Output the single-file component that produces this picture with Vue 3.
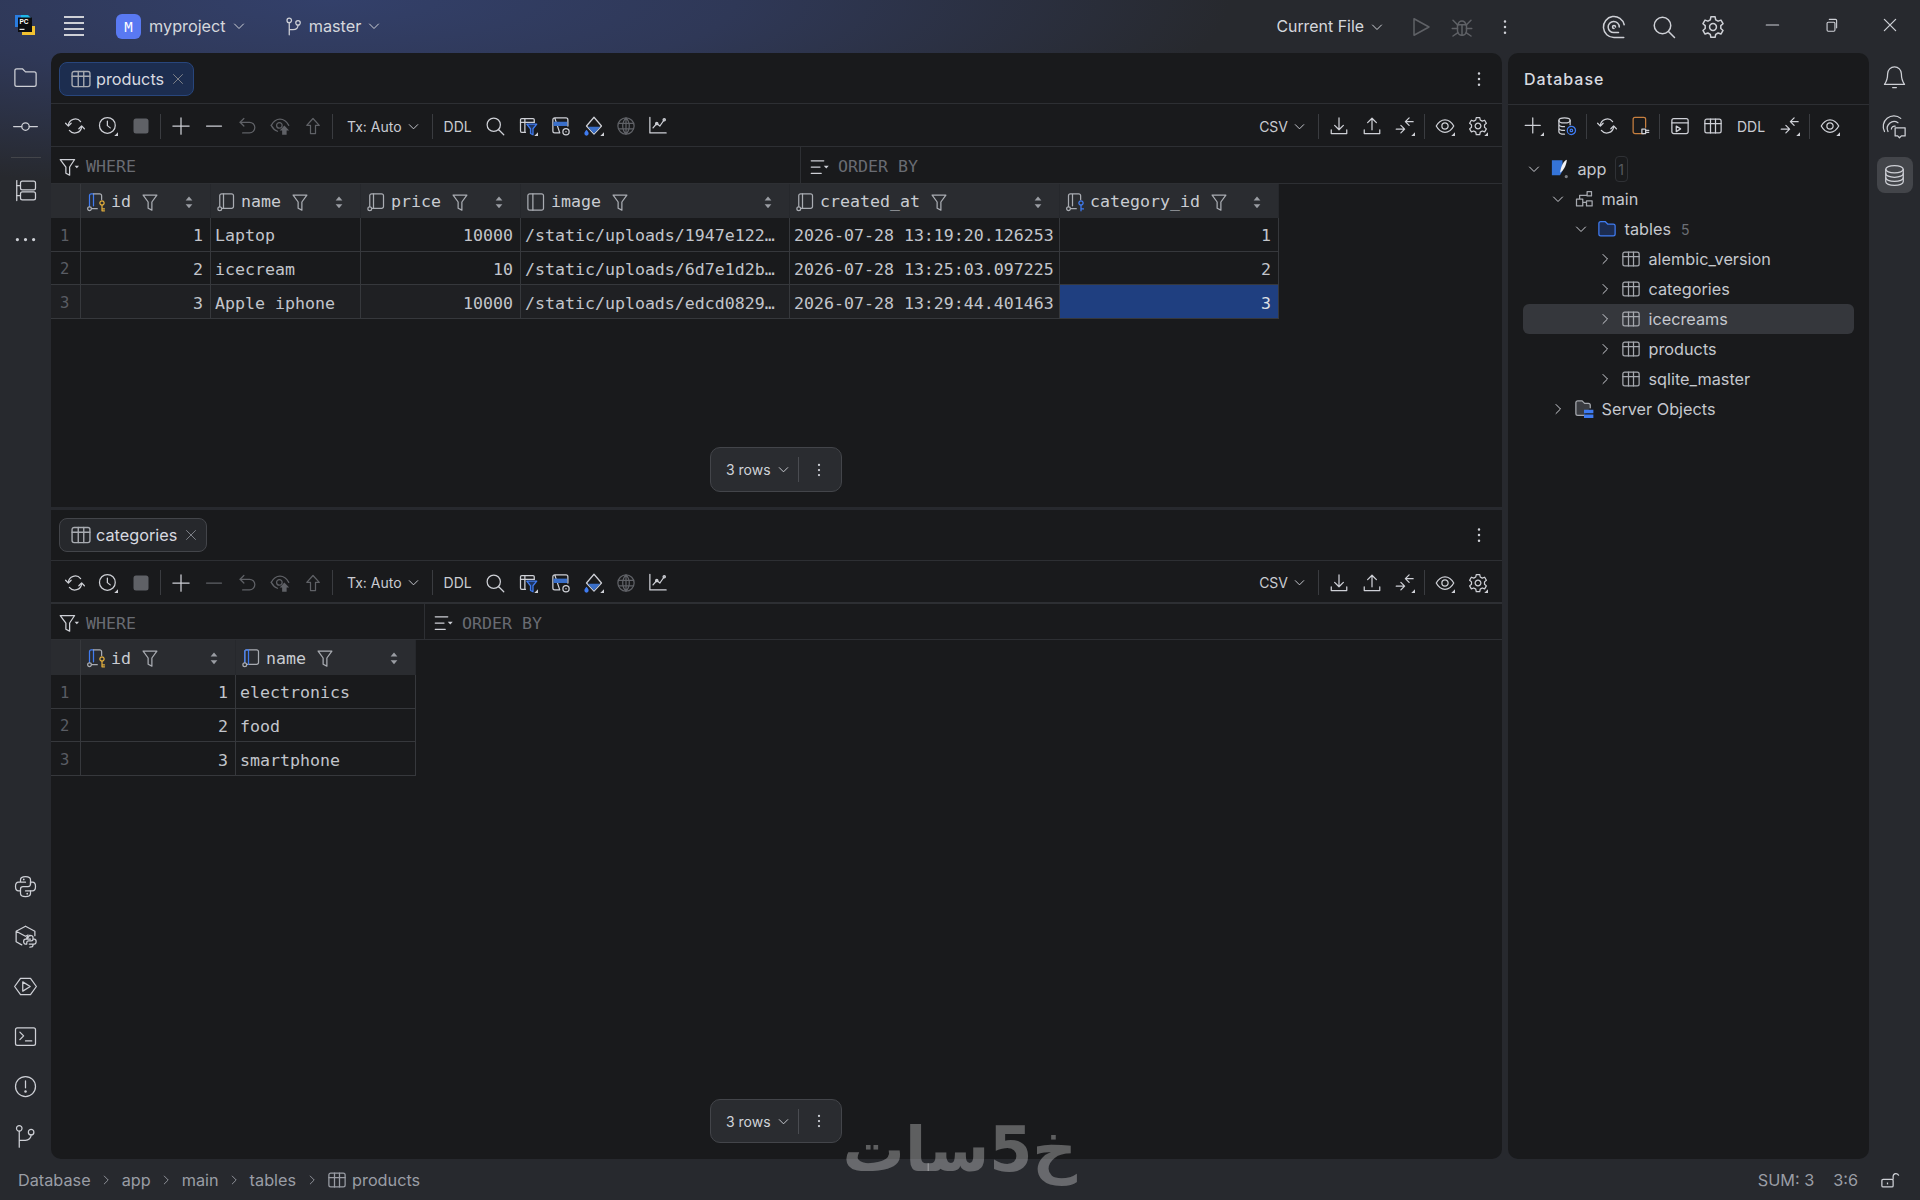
<script setup>
import { h } from 'vue'

const circ = (x, y, r) => `M${x - r} ${y}a${r} ${r} 0 1 0 ${2 * r} 0a${r} ${r} 0 1 0 ${-2 * r} 0z`
const tri = { d: 'M16 13v3h-3z', f: '#ced0d6', c: 'none' }
const BLUE = '#3f7bf0'
const tableD = ['M3 2.5h10A1.5 1.5 0 0 1 14.5 4v8a1.5 1.5 0 0 1-1.5 1.5H3A1.5 1.5 0 0 1 1.5 12V4A1.5 1.5 0 0 1 3 2.5z', 'M1.5 6h13M6 2.5v11M10 2.5v11']
const gearD = ['M6.6 1.2h2.8l.4 2 1.6.9 1.9-.7 1.4 2.4-1.5 1.3v1.9l1.5 1.3-1.4 2.4-1.9-.7-1.6.9-.4 2H6.6l-.4-2-1.6-.9-1.9.7-1.4-2.4 1.5-1.3V7.1L1.3 5.8 2.7 3.4l1.9.7 1.6-.9z', circ(8, 8, 2.3)]
const colBody = 'M3 11.5V3A1.5 1.5 0 0 1 4.5 1.5h8A1.5 1.5 0 0 1 14 3v8.5a1.5 1.5 0 0 1-1.5 1.5H5'
const pyD = [
  'M10 6.5H6V4.500C6 3 7.500 2 10 2s4 1 4 2.500V8a2 2 0 0 1-2 2H8a2 2 0 0 0-2 2v1.500H4.500C3 13.500 2 12 2 10s1-3.500 2.500-3.500H6',
  'M10 13.500h4v2C14 17 12.500 18 10 18s-4-1-4-2.500V13.500',
  'M14 13.500h1.500C17 13.500 18 12 18 10s-1-3.500-2.500-3.500H14V8',
  { d: circ(8.600, 4.300, .7), f: 'currentColor', c: 'none' },
  { d: circ(11.400, 15.700, .7), f: 'currentColor', c: 'none' },
]

const ICONS = {
  refresh: ['M2.700 7.500A5.500 5.500 0 0 1 12.500 4.500', 'M13.300 8.500A5.500 5.500 0 0 1 3.500 11.500', 'M.5 5.800l2.200 2.300 2.200-2.300', 'M11.100 10.200l2.200-2.300 2.200 2.300'],
  clock: [circ(7.500, 7.500, 6.300), 'M7.500 4v3.700l2.300 1.800', tri],
  stop: [{ d: 'M4 2h8a2 2 0 0 1 2 2v8a2 2 0 0 1-2 2H4a2 2 0 0 1-2-2V4a2 2 0 0 1 2-2z', f: '#5f6166', c: 'none' }],
  plus: ['M8 1.500v13M1.500 8h13'],
  minus: ['M2 8h12'],
  undo: ['M5.500 2L2.500 5l3 3', 'M2.500 5H10a4 4 0 0 1 0 8.500H4.500'],
  eyeup: ['M1 7.500C2.700 4.300 5 2.500 8 2.500s5.300 1.800 7 5', 'M1 7.500c1.300 2.500 3 4 5 4.700', circ(7.500, 7.500, 2.200), { d: 'M11.500 7.500l3.800 4h-2v3.500h-3.600v-3.500h-2z', f: '#5f6166', c: 'none' }],
  up: ['M8 2L3 7.500h3v6.500h4V7.500h3z'],
  search: [circ(7, 7, 5.300), 'M11 11l4 4'],
  tfilter: ['M13 5V3a1 1 0 0 0-1-1H3a1 1 0 0 0-1 1v9a1 1 0 0 0 1 1h3', 'M5.500 2v11M2 5h11', { d: 'M7 6.500h8l-3 3.700V15l-2-1v-3.800z', c: BLUE, f: '#1f3560' }, tri],
  tview: ['M3 1.500h9A1.500 1.500 0 0 1 13.500 3v5M7 13.500H3A1.500 1.500 0 0 1 1.500 12V3A1.500 1.500 0 0 1 3 1.500z', { d: 'M2 4.500h11v3.500H2z', f: '#3a6fc9', c: 'none' }, circ(12, 12.500, 2.500), { d: circ(12, 12.500, .6), f: '#ced0d6', c: 'none' }],
  fill: ['M8 1L14 8l-6 6.500L2 8z', { d: 'M3 8.500h10L8 14z', f: '#3a6fc9', c: 'none' }, { d: 'M2 11c1 1.300 1.700 2 1.700 3a1.700 1.700 0 0 1-3.400 0c0-1 .7-1.700 1.700-3z', f: BLUE, c: 'none' }, tri],
  globe: [circ(8, 8, 6.500), 'M8 1.500c-3.500 3.500-3.500 9.500 0 13M8 1.500c3.500 3.500 3.500 9.500 0 13M2 5.800h12M2 10.200h12M8 1.500v13'],
  chart: ['M1.500 1v12.500h13', 'M4 9.500l3-3.500 2.500 2L13 3', circ(7, 6, .9), circ(13, 3, .9)],
  down: ['M8 1.500v9.500M4.500 7.500L8 11l3.500-3.500', 'M1.800 11v3h12.400v-3'],
  upl: ['M8 11V1.800M4.500 5.300L8 1.800l3.500 3.500', 'M1.800 11v3h12.400v-3'],
  cmp: ['M14.500 4.500H8.500M11.300 1.500l-3 3 3 3', 'M1 10.500h6.500M4.700 7.500l3 3-3 3', tri],
  eye: ['M1 8c1.800-3.300 4-5 7-5s5.200 1.700 7 5c-1.800 3.300-4 5-7 5s-5.200-1.700-7-5z', circ(8, 8, 2.500), tri],
  gear: [...gearD],
  gearT: [...gearD, tri],
  table: tableD,
  plusT: ['M7 1.500v12M1 7.500h12', tri],
  dbgear: ['M1.500 3.500c0-1.100 2-2 4.500-2s4.500.9 4.500 2-2 2-4.500 2-4.500-.9-4.500-2z', 'M1.500 3.500v9c0 1.100 2 2 4.500 2M10.500 3.500V7M1.500 6.500c0 1.100 2 2 4.500 2M1.500 9.500c0 1.100 2 2 4.500 2', { d: circ(11.500, 11.500, 3.300), c: BLUE, f: 'none' }, { d: circ(11.500, 11.500, 1), c: BLUE, f: 'none' }],
  plug: [{ d: 'M11 14H4a1.500 1.500 0 0 1-1.500-1.500v-10A1.500 1.500 0 0 1 4 1h7a1.500 1.500 0 0 1 1.500 1.500V9', c: '#c77f3f' }, 'M9.500 10.500h3v3.500h-3zM12.500 11.500h2.500M12.500 13h2.500'],
  console: ['M3 2h10a1.500 1.500 0 0 1 1.500 1.500v9A1.500 1.500 0 0 1 13 14H3a1.500 1.500 0 0 1-1.500-1.500v-9A1.500 1.500 0 0 1 3 2z', 'M1.500 5.500h13', 'M5 8l3.500 2.300L5 12.500z'],
  fw: ['M2.500 2.500h11L9.500 8v6.500L6.500 13V8z'],
  wh: ['M1 2h11.500L8.500 8v6.500L5.500 13V8z', { d: 'M12.500 7h3.500l-1.750 2z', f: '#ced0d6', c: 'none' }],
  ob: ['M1 3h10M1 8h7M1 13h8', { d: 'M11 7h4l-2 2.200z', f: '#ced0d6', c: 'none' }],
  sort: [{ d: 'M8 3.500l2.700 3.300H5.300zM8 13l-2.700-3.300h5.400z', f: '#9a9da3', c: 'none' }],
  cPk: [{ d: 'M2.800 11.500V3A1.500 1.500 0 0 1 4.300 1.500H6V11', c: BLUE }, 'M6 1.500h5A1.500 1.500 0 0 1 12.500 3v3', circ(2.800, 13.300, 1.500), 'M4.500 13.300H9', { d: circ(12.800, 8.800, 1.700), c: '#e0ad3c' }, { d: 'M12.800 10.500V15M12.800 13.500h2M12.800 15h2', c: '#e0ad3c' }],
  cFk: ['M2.800 11.500V3A1.500 1.500 0 0 1 4.300 1.500H11A1.500 1.500 0 0 1 12.500 3v3M6 1.500V11', circ(2.800, 13.300, 1.500), 'M4.500 13.300H9', { d: circ(12.800, 8.800, 1.700), c: BLUE }, { d: 'M12.800 10.500V15M12.800 13.500h2', c: BLUE }],
  cCol: [colBody, 'M6 1.500V13', circ(3, 13.300, 1.500)],
  cBlue: [colBody, { d: 'M3 11.500V3A1.500 1.500 0 0 1 4.500 1.500H6V13', c: BLUE }, circ(3, 13.300, 1.500)],
  cImg: ['M3 1.500h9.500A1.500 1.500 0 0 1 14 3v10a1.500 1.500 0 0 1-1.500 1.500H3A1.500 1.500 0 0 1 1.500 13V3A1.500 1.500 0 0 1 3 1.500z', 'M5.500 1.500v13'],
  chevD: ['M3.500 6l4.500 4.500L12.500 6'],
  chevR: ['M6 3.500l4.500 4.500L6 12.500'],
  x: ['M3.500 3.500l9 9M12.500 3.500l-9 9'],
  kebab: [{ d: circ(8, 3.500, 1) + circ(8, 8, 1) + circ(8, 12.500, 1), f: 'currentColor', c: 'none' }],
  branch: [circ(5, 3.500, 1.800), circ(12, 5.500, 1.800), 'M5 5.300V15M12 7.300c0 2.500-2 3.500-4 3.500H5'],
  play: ['M4 2.500l10 5.500-10 5.500z'],
  bug: ['M5 6.500h6v4a3 3 0 0 1-6 0z', 'M5.500 6.500a2.500 2.500 0 0 1 5 0M8 6.500V13.500M2 3.500l3 3M14 3.500l-3 3M1.500 9h3.500M14.500 9H11M2 14l3.300-2.300M14 14l-3.300-2.300'],
  spiral: ['M14.800 6.500A7 7 0 1 0 8 15H14.500', 'M11.500 8A3.700 3.700 0 1 0 8 11.700H11', 'M9 8a1 1 0 1 0-1 1'],
  mag: [circ(7, 7, 5.500), 'M11 11l4 4'],
  minW: ['M2 8h11'],
  restore: ['M5.500 5.500h5a1 1 0 0 1 1 1v6a1 1 0 0 1-1 1h-5a1 1 0 0 1-1-1v-6a1 1 0 0 1 1-1z', 'M6.500 3h5.500a1 1 0 0 1 1 1v6.500'],
  folder: ['M1.500 5V4.500A1.500 1.500 0 0 1 3 3h4.500L10 5.500h7A1.500 1.500 0 0 1 18.500 7v8.500A1.500 1.500 0 0 1 17 17H3a1.500 1.500 0 0 1-1.500-1.500z'],
  commit: [circ(10, 10, 3), 'M.5 10H7M13 10h6.500'],
  struct: ['M3 2v16', 'M3 6h3M3 14h3', 'M7.500 2.500h9A1.500 1.500 0 0 1 18 4v4a1.500 1.500 0 0 1-1.500 1.500h-9A1.500 1.500 0 0 1 6 8V4a1.500 1.500 0 0 1 1.500-1.500z', 'M7.500 11h9a1.500 1.500 0 0 1 1.500 1.500V16a1.500 1.500 0 0 1-1.500 1.500h-9A1.500 1.500 0 0 1 6 16v-3.500A1.500 1.500 0 0 1 7.500 11z'],
  dots: [{ d: circ(3.500, 10, 1.300) + circ(10, 10, 1.300) + circ(16.500, 10, 1.300), f: 'currentColor', c: 'none' }],
  python: pyD,
  pkgs: ['M10 1.800l7.500 4v3.500M10 1.800L2.500 5.800v8.400l4.500 2.500M2.500 5.800L10 9.800l2-1', 'M13.500 9.500c-1.800 0-2.500.6-2.500 1.500v1h3M11 12h-1c-1 0-1.500 1-1.500 2s.5 2 1.500 2h1v-1c0-.9.600-1.500 1.500-1.500h2c.9 0 1.500-.6 1.500-1.500v-1.500c0-.9-1-1.500-2.500-1.500zM13.500 18.500c1.800 0 2.500-.6 2.500-1.500v-1h-3M16 16h1c1 0 1.500-1 1.500-2s-.5-2-1.500-2h-1'],
  services: ['M6 3.500h8l4.700 6.500L14 16.500H6L1.300 10z', 'M7.800 6.300l6 3.700-6 3.700z'],
  term: ['M3.500 3h13A1.500 1.500 0 0 1 18 4.500v11a1.500 1.500 0 0 1-1.500 1.500h-13A1.500 1.500 0 0 1 2 15.500v-11A1.500 1.500 0 0 1 3.500 3z', 'M5.500 6.500l3 3-3 3M10 13.500h5'],
  problems: [circ(10, 10, 8), 'M10 5.500V11', { d: circ(10, 14, 1), f: 'currentColor', c: 'none' }],
  git: [circ(5, 3.500, 2.200), circ(14.500, 6.500, 2.200), 'M5 5.700V18.500M14.500 8.700c0 2.500-2 4.300-4.500 4.300H5'],
  bell: ['M10 1.500a5.500 5.500 0 0 1 5.500 5.500c0 4 .7 6 2.500 8.500H2C3.800 13 4.500 11 4.500 7A5.500 5.500 0 0 1 10 1.500z', 'M8.500 18h3'],
  aichat: ['M2 14A8.500 8.500 0 0 1 15 3.500', 'M4.800 14a5.500 5.500 0 0 1 8-7', 'M7.500 12a2.600 2.600 0 0 1 3-2.300', 'M10.500 11h8v6.500h-3l-1.500 1.500-1.500-1.500h-2z'],
  db: ['M3 5c0-1.600 3-2.900 7-2.900s7 1.300 7 2.900-3 2.900-7 2.900S3 6.600 3 5z', 'M3 5v10c0 1.600 3 2.900 7 2.900s7-1.300 7-2.900V5', 'M3 8.500c0 1.600 3 2.900 7 2.900s7-1.300 7-2.900M3 11.800c0 1.600 3 2.900 7 2.900s7-1.300 7-2.900'],
  app: [{ d: 'M1.500 1h8.500v8.500L8 13H1.500z', f: '#3574d8', c: 'none' }, { d: 'M13.500.5C10.800 1.500 9 5 8 11c2.800-2 5-5.500 5.500-10.500z', f: '#f2f3f5', c: 'none' }, { d: circ(13, 14, 1.300), f: '#7c7f85', c: 'none' }],
  schema: ['M2 8h5v5.500H2zM10.500 2H14v3.500h-3.500zM10 9.500h4.500v4H10zM4.500 8V5H10M7 10.700h3'],
  folderB: [{ d: 'M1.500 3.500A1.500 1.500 0 0 1 3 2h3.500l2 2H13a1.500 1.500 0 0 1 1.500 1.500V12a1.500 1.500 0 0 1-1.500 1.500H3A1.500 1.500 0 0 1 1.500 12z', c: BLUE, f: '#1c2c50' }],
  srv: [{ d: 'M8 13H3a1.500 1.500 0 0 1-1.500-1.500V3A1.500 1.500 0 0 1 3 1.500h3.500l2 2h3A1.500 1.500 0 0 1 13 5v2', f: '#3a3c41' }, { d: 'M8 8.500h7.500v2.800H8zM8 12.300h7.500v2.800H8z', f: BLUE, c: 'none' }],
}

const Ic = (props) => {
  const s = props.s || 20
  const vb = props.vb || 16
  return h('svg', { class: 'ic', width: s, height: s, viewBox: `0 0 ${vb} ${vb}`, fill: 'none', 'stroke-width': 1, 'stroke-linecap': 'round', 'stroke-linejoin': 'round' },
    (ICONS[props.n] || []).map((p) => {
      const o = typeof p === 'string' ? { d: p } : p
      return h('path', { d: o.d, stroke: o.c || 'currentColor', fill: o.f || 'none' })
    }))
}
Ic.props = ['n', 's', 'vb']

const leftTop = ['folder', 'commit', null, 'struct', 'dots']
const leftBottom = ['python', 'pkgs', 'services', 'term', 'problems', 'git']

const panes = [
  {
    name: 'products', cls: 'first', active: true, whereW: 750, minusDim: false,
    cols: [
      { n: 'id', icon: 'cPk', w: 130 }, { n: 'name', icon: 'cCol', w: 150 }, { n: 'price', icon: 'cCol', w: 160 },
      { n: 'image', icon: 'cImg', w: 269 }, { n: 'created_at', icon: 'cCol', w: 270 }, { n: 'category_id', icon: 'cFk', w: 219 },
    ],
    rows: [
      ['1', 'Laptop', '10000', '/static/uploads/1947e122…', '2026-07-28 13:19:20.126253', '1'],
      ['2', 'icecream', '10', '/static/uploads/6d7e1d2b…', '2026-07-28 13:25:03.097225', '2'],
      ['3', 'Apple iphone', '10000', '/static/uploads/edcd0829…', '2026-07-28 13:29:44.401463', '3'],
    ],
    right: [0, 2, 5], hover: 2, sel: [2, 5],
  },
  {
    name: 'categories', cls: 'second', active: false, whereW: 374, minusDim: true,
    cols: [{ n: 'id', icon: 'cPk', w: 155 }, { n: 'name', icon: 'cBlue', w: 180 }],
    rows: [['1', 'electronics'], ['2', 'food'], ['3', 'smartphone']],
    right: [0], hover: -1, sel: [-1, -1],
  },
]
const gridCols = (p) => '30px ' + p.cols.map((c) => c.w + 'px').join(' ')

const tree = [
  { t: 'app', lv: 0, icon: 'app', open: true, badge: '1' },
  { t: 'main', lv: 1, icon: 'schema', open: true },
  { t: 'tables', lv: 2, icon: 'folderB', open: true, count: '5' },
  { t: 'alembic_version', lv: 3, icon: 'table' },
  { t: 'categories', lv: 3, icon: 'table' },
  { t: 'icecreams', lv: 3, icon: 'table', sel: true },
  { t: 'products', lv: 3, icon: 'table' },
  { t: 'sqlite_master', lv: 3, icon: 'table' },
  { t: 'Server Objects', lv: 1, icon: 'srv' },
]
const crumbs = ['Database', 'app', 'main', 'tables']
</script>

<template>
  <div class="app">
    <header class="title">
      <div class="title-left">
        <svg class="logo" width="22" height="22" viewBox="0 0 22 22">
          <path d="M1 1h13l3 3v8H1z" fill="#1fb6e8" />
          <path d="M1 1h6v12H1z" fill="#2a7de1" />
          <path d="M8 12h13v9H8z" fill="#f2c230" />
          <rect x="4" y="3.500" width="14" height="14.500" fill="#0c0d0f" />
          <text x="5.500" y="10" class="logo-text">PC</text>
          <rect x="5.500" y="14.800" width="5" height="1.100" fill="#fff" />
        </svg>
        <div class="burger"><span v-for="i in 4" :key="i"></span></div>
        <div class="proj-badge">M</div>
        <span class="title-text lift proj">myproject</span>
        <Ic n="chevD" :s="16" class="chev-title lift" />
        <Ic n="branch" class="branch lift" />
        <span class="title-text lift">master</span>
        <Ic n="chevD" :s="16" class="chev-title lift" />
      </div>
      <div class="title-right">
        <span class="title-text cur">Current File</span>
        <Ic n="chevD" :s="16" class="chev-title" />
        <Ic n="play" :s="24" class="t-run dim" />
        <Ic n="bug" :s="24" class="t-bug dim" />
        <Ic n="kebab" class="t-keb" />
        <Ic n="spiral" :s="24" class="t-spiral" />
        <Ic n="mag" :s="24" class="t-mag" />
        <Ic n="gear" :s="24" class="t-gear" />
        <Ic n="minW" :s="18" class="t-min wc" />
        <Ic n="restore" :s="18" class="t-rest wc" />
        <Ic n="x" :s="20" class="t-close wc" />
      </div>
    </header>

    <div class="body">
      <nav class="rail">
        <div class="rail-group">
          <template v-for="(n, i) in leftTop" :key="i">
            <div v-if="n" class="rail-btn"><Ic :n="n" :s="25" :vb="20" /></div>
            <div v-else class="rail-sep"></div>
          </template>
        </div>
        <div class="rail-group bottom">
          <div v-for="n in leftBottom" :key="n" class="rail-btn"><Ic :n="n" :s="25" :vb="20" /></div>
        </div>
      </nav>

      <main class="editor">
        <section v-for="p in panes" :key="p.name" class="pane" :class="p.cls">
          <div class="tabs">
            <div class="tab" :class="{ active: p.active }">
              <Ic n="table" :s="22" />
              <span class="tab-name">{{ p.name }}</span>
              <Ic n="x" :s="16" class="tab-x" />
            </div>
            <Ic n="kebab" class="pane-keb" />
          </div>

          <div class="toolbar">
            <button class="tb"><Ic n="refresh" /></button>
            <button class="tb"><Ic n="clock" /></button>
            <button class="tb"><Ic n="stop" /></button>
            <i class="sep"></i>
            <button class="tb"><Ic n="plus" /></button>
            <button class="tb" :class="{ dim: p.minusDim }"><Ic n="minus" /></button>
            <button class="tb dim"><Ic n="undo" /></button>
            <button class="tb dim"><Ic n="eyeup" /></button>
            <button class="tb dim"><Ic n="up" /></button>
            <i class="sep"></i>
            <span class="tb-label tx">Tx: Auto</span>
            <Ic n="chevD" :s="15" class="tb-chev" />
            <i class="sep s3"></i>
            <span class="tb-label ddl">DDL</span>
            <button class="tb"><Ic n="search" /></button>
            <button class="tb"><Ic n="tfilter" /></button>
            <button class="tb"><Ic n="tview" /></button>
            <button class="tb n"><Ic n="fill" /></button>
            <button class="tb n dim"><Ic n="globe" /></button>
            <button class="tb n"><Ic n="chart" /></button>
            <div class="grow"></div>
            <span class="tb-label">CSV</span>
            <Ic n="chevD" :s="15" class="tb-chev" />
            <i class="sep s4"></i>
            <button class="tb"><Ic n="down" /></button>
            <button class="tb"><Ic n="upl" /></button>
            <button class="tb"><Ic n="cmp" /></button>
            <i class="sep"></i>
            <button class="tb"><Ic n="eye" /></button>
            <button class="tb"><Ic n="gearT" /></button>
          </div>

          <div class="where-row">
            <div class="where" :style="{ width: p.whereW + 'px' }">
              <Ic n="wh" />
              <span class="mono dimtext">WHERE</span>
            </div>
            <div class="order">
              <Ic n="ob" />
              <span class="mono dimtext">ORDER BY</span>
            </div>
          </div>

          <div class="grid" :style="{ gridTemplateColumns: gridCols(p) }">
            <div class="hcell gutter"></div>
            <div v-for="c in p.cols" :key="c.n" class="hcell">
              <Ic :n="c.icon" />
              <span class="mono hname">{{ c.n }}</span>
              <Ic n="fw" class="hfilter" />
              <Ic n="sort" class="hsort" />
            </div>
            <template v-for="(r, ri) in p.rows" :key="ri">
              <div class="cell gutter num" :class="{ hover: p.hover === ri }">{{ ri + 1 }}</div>
              <div
                v-for="(v, ci) in r"
                :key="ci"
                class="cell mono"
                :class="{ right: p.right.includes(ci), hover: p.hover === ri, sel: p.sel[0] === ri && p.sel[1] === ci }"
              >{{ v }}</div>
            </template>
          </div>

          <div class="rows-pop">
            <span>3 rows</span>
            <Ic n="chevD" :s="15" class="pop-chev" />
            <i class="pop-sep"></i>
            <Ic n="kebab" :s="18" class="pop-keb" />
          </div>
        </section>
      </main>

      <aside class="dbpanel">
        <div class="db-title">Database</div>
        <div class="toolbar db-tb">
          <button class="tb"><Ic n="plusT" /></button>
          <button class="tb"><Ic n="dbgear" /></button>
          <i class="sep"></i>
          <button class="tb"><Ic n="refresh" /></button>
          <button class="tb"><Ic n="plug" /></button>
          <i class="sep"></i>
          <button class="tb"><Ic n="console" /></button>
          <button class="tb"><Ic n="table" /></button>
          <span class="tb-label d2">DDL</span>
          <button class="tb"><Ic n="cmp" /></button>
          <i class="sep"></i>
          <button class="tb"><Ic n="eye" /></button>
        </div>
        <ul class="tree">
          <li v-for="n in tree" :key="n.t" class="node" :class="['lv' + n.lv, { sel: n.sel }]">
            <Ic :n="n.open ? 'chevD' : 'chevR'" :s="16" class="node-chev" />
            <Ic :n="n.icon" class="node-ic" />
            <span class="node-t">{{ n.t }}</span>
            <span v-if="n.badge" class="badge">{{ n.badge }}</span>
            <span v-if="n.count" class="count">{{ n.count }}</span>
          </li>
        </ul>
      </aside>

      <nav class="rail rail-r">
        <div class="rail-group">
          <div class="rail-btn"><Ic n="bell" :s="25" :vb="20" /></div>
          <div class="rail-btn"><Ic n="aichat" :s="25" :vb="20" /></div>
          <div class="rail-btn on"><Ic n="db" :s="25" :vb="20" /></div>
        </div>
      </nav>
    </div>

    <footer class="status">
      <template v-for="c in crumbs" :key="c">
        <span>{{ c }}</span>
        <Ic n="chevR" :s="14" class="crumb-chev" />
      </template>
      <Ic n="table" class="crumb-ic" />
      <span>products</span>
      <div class="grow"></div>
      <span>SUM: 3</span>
      <span class="pos">3:6</span>
      <svg class="lock" width="20" height="20" viewBox="0 0 16 16" fill="none" stroke="currentColor">
        <path d="M2.500 7.500h7a1 1 0 0 1 1 1v4a1 1 0 0 1-1 1h-7a1 1 0 0 1-1-1v-4a1 1 0 0 1 1-1z" />
        <path d="M10.500 7.500V5a2.300 2.300 0 0 1 4.500-.5" />
        <path d="M6 10v1.500" />
      </svg>
    </footer>

    <div class="watermark" dir="rtl">خ5سات</div>
  </div>
</template>

<style>
body { margin: 0; background: #26282d; }
.ic { display: block; flex: none; }
</style>

<style scoped>
.app {
  position: relative;
  width: 1920px;
  height: 1200px;
  display: flex;
  flex-direction: column;
  overflow: hidden;
  font-family: Inter, "Noto Sans", sans-serif;
  color: #ced0d6;
  background:
    radial-gradient(ellipse 900px 190px at 330px 0, #33406a 0%, #2f3857 45%, rgba(39, 41, 46, 0) 100%),
    #27292e;
}
.grow { flex: 1; }
.dim { color: #5f6166; }

/* title bar */
.title { height: 53px; flex: none; display: flex; justify-content: space-between; align-items: center; }
.title-left, .title-right { display: flex; align-items: center; }
.logo { margin: 0 0 3px 14px; }
.logo-text { font: 700 6.500px "Liberation Sans", sans-serif; fill: #fff; }
.burger { margin: 0 0 1px 28px; width: 20px; display: flex; flex-direction: column; gap: 4px; }
.burger span { height: 2px; background: #ced0d6; }
.proj-badge {
  margin-left: 32px; width: 25px; height: 25px; border-radius: 6px; background: #5979f2; color: #fff;
  font: 14px "DejaVu Sans Mono", monospace; display: flex; align-items: center; justify-content: center;
}
.title-text { font-size: 16.250px; color: #d5d7dc; }
.lift { margin-bottom: 2px; }
.proj { margin-left: 8px; }
.chev-title { margin-left: 5px; color: #ced0d6; }
.branch { margin-left: 36px; margin-right: 6px; }
.cur { font-size: 15.900px; }
.t-run { margin-left: 23px; }
.t-bug { margin-left: 18px; }
.t-keb { margin-left: 21px; }
.t-spiral { margin-left: 87px; }
.t-mag { margin-left: 26px; }
.t-gear { margin-left: 25px; }
.t-min { margin-left: 39px; }
.t-rest { margin-left: 40px; }
.t-close { margin-left: 40px; margin-right: 20px; }
.wc { margin-bottom: 3px; }

/* body */
.body { flex: 1; min-height: 0; display: flex; }
.rail { width: 51px; flex: none; display: flex; flex-direction: column; justify-content: space-between; align-items: center; }
.rail-group { display: flex; flex-direction: column; align-items: center; padding-top: 6px; }
.rail-btn { width: 36px; height: 36px; margin-bottom: 13.200px; display: flex; align-items: center; justify-content: center; border-radius: 8px; }
.rail-btn:last-child { margin-bottom: 0; }
.rail-group.bottom { padding-top: 0; margin-bottom: 5px; gap: 14px; }
.rail-group.bottom .rail-btn { margin-bottom: 0; }
.rail-sep { width: 30px; height: 1px; background: #43454a; margin: 0 0 14px; }
.rail-btn.on { background: #43454a; }

.editor {
  width: 1451px; flex: none; background: #191a1c; border-radius: 10px; overflow: hidden;
  display: flex; flex-direction: column;
}
.pane { position: relative; display: flex; flex-direction: column; }
.pane.first { height: 454px; flex: none; border-bottom: 3px solid #27292e; }
.pane.second { flex: 1; }

.tabs {
  height: 51px; box-sizing: border-box; flex: none; padding: 9px 10px 0 8px;
  display: flex; justify-content: space-between; align-items: flex-start; border-bottom: 1px solid #2d2f33;
}
.second .tabs { padding-top: 8px; }
.tab {
  height: 34px; box-sizing: border-box; display: flex; align-items: center; padding: 0 7px 0 10px; border-radius: 8px;
  background: #26282c; border: 1px solid #43454a; color: #a8abb1;
}
.tab.active { background: #1c2d4f; border-color: #28467c; }
.tab-name { margin-left: 4px; font-size: 16.250px; color: #d8dae0; }
.tab-x { margin-left: 6px; color: #7d8087; }
.pane-keb { margin-top: 7px; color: #ced0d6; margin-right: 3px; }

.toolbar {
  height: 43px; flex: none; box-sizing: border-box; display: flex; align-items: center; padding: 2px 8px 0 7px;
  border-bottom: 1px solid #2d2f33;
}
.second .toolbar { border-bottom-width: 2px; }
.tb {
  all: unset; width: 33px; height: 33px; flex: none; display: flex; align-items: center; justify-content: center;
  color: #ced0d6;
}
.tb.n { width: 32px; }
.tb.dim { color: #5f6166; }
.sep { display: block; width: 1px; height: 25px; background: #3a3c40; margin: 0 3px; flex: none; }
.tb-label { font-size: 14px; color: #c9ccd2; }
.tx { margin-left: 11px; }
.tb-chev { margin-left: 4px; color: #ced0d6; margin-right: 10px; }
.s3 { margin: 0 11px 0 1px; }
.ddl { margin-right: 7px; }
.s4 { margin: 0 3px 0 1px; }

.where-row { height: 37px; flex: none; box-sizing: border-box; display: flex; border-bottom: 1px solid #2d2f33; }
.second .where-row { height: 36px; }
.where, .order { display: flex; align-items: center; gap: 7px; padding: 3px 0 0 8px; color: #ced0d6; box-sizing: border-box; }
.where { flex: none; border-right: 1px solid #2d2f33; }
.order { padding-left: 9px; gap: 8px; }
.mono { font-family: "DejaVu Sans Mono", monospace; font-size: 16.600px; }
.dimtext { color: #696c73; }

.grid { display: grid; justify-content: start; }
.hcell {
  height: 34px; box-sizing: border-box; background: #2a2c30; display: flex; align-items: center; padding: 1px 11px 0 5px;
  border-right: 1px solid #26282c; color: #a9acb2;
}
.second .hcell { height: 35px; }
.hname { margin-left: 5px; color: #c9ccd2; }
.hfilter { margin-left: 9px; }
.hsort { margin-left: auto; }
.cell {
  height: 33.670px; box-sizing: border-box; display: flex; align-items: center; padding: 3px 4px 0;
  border-right: 1px solid #36383c; border-bottom: 1px solid #36383c; color: #c2c5cb; white-space: pre; overflow: hidden;
}
.cell.right { justify-content: flex-end; padding-right: 7px; }
.cell.hover { background: #1f2023; }
.cell.sel { background: #1f3f80; color: #dfe1e5; }
.gutter { border-right: 1px solid #36383c; }
.hcell.gutter { border-bottom: 0; }
.num { font-family: "DejaVu Sans Mono", monospace; font-size: 15.500px; color: #5a5d64; padding-left: 9px; }

.rows-pop {
  position: absolute; left: 659px; bottom: 15px; width: 132px; height: 45px; box-sizing: border-box;
  border: 1px solid #43454a; border-radius: 10px; background: #2a2c30; display: flex; align-items: center;
  padding-left: 15px; font-size: 14px; color: #d0d3d9;
}
.pop-chev { margin-left: 5px; }
.pop-sep { display: block; width: 1px; height: 25px; background: #4a4c51; margin-left: 7px; }
.pop-keb { margin-left: 11px; }
.second .rows-pop { bottom: 16px; height: 44px; }

/* database panel */
.dbpanel { width: 361px; flex: none; margin-left: 6px; background: #191a1c; border-radius: 10px; overflow: hidden; }
.db-title {
  height: 52px; box-sizing: border-box; padding-left: 16px; display: flex; align-items: center; font-size: 16px; font-weight: 500;
  letter-spacing: 1px; color: #d8dae0; border-bottom: 1px solid #2d2f33;
}
.db-tb { border-bottom: 0; height: 42px; padding: 0 0 0 9px; }
.db-tb .tb { width: 33px; }
.d2 { margin: 0 8px 0 8px; color: #c9ccd2; }
.tree { list-style: none; margin: 7px 0 0; padding: 0 15px; }
.node { height: 30px; position: relative; display: flex; align-items: center; border-radius: 6px; font-size: 16.250px; color: #c5c8ce; }
.node-chev { color: #ced0d6; flex: none; }
.node-ic { color: #a6a9af; margin-left: 7.500px; }
.node-t { margin-left: 8px; }
.lv0 { padding-left: 3px; }
.lv1 { padding-left: 27px; }
.lv2 { padding-left: 50px; }
.lv3 { padding-left: 74px; }
.node.sel { background: #35373c; }
.badge {
  margin-left: 8px; width: 13px; height: 26px; box-sizing: border-box; border: 1px solid #2f3135; border-radius: 4px;
  display: flex; align-items: center; justify-content: center; font-size: 14px; color: #56595f;
}
.count { margin-left: 10px; font-size: 14px; color: #6c6f75; }

/* status */
.status {
  height: 41px; flex: none; display: flex; align-items: center; padding: 0 20px 0 18px; font-size: 16.250px; color: #9a9da5;
}
.crumb-chev { margin: 0 8.500px; color: #9a9da5; }
.crumb-ic { margin-right: 5px; }
.pos { margin-left: 19px; }
.lock { margin-left: 22px; color: #ced0d6; }

.watermark {
  position: absolute; left: 845px; top: 1119px; width: 232px; text-align: center;
  font: 700 62px/1 "DejaVu Sans", sans-serif; color: rgba(255, 255, 255, .3); pointer-events: none;
}
</style>
